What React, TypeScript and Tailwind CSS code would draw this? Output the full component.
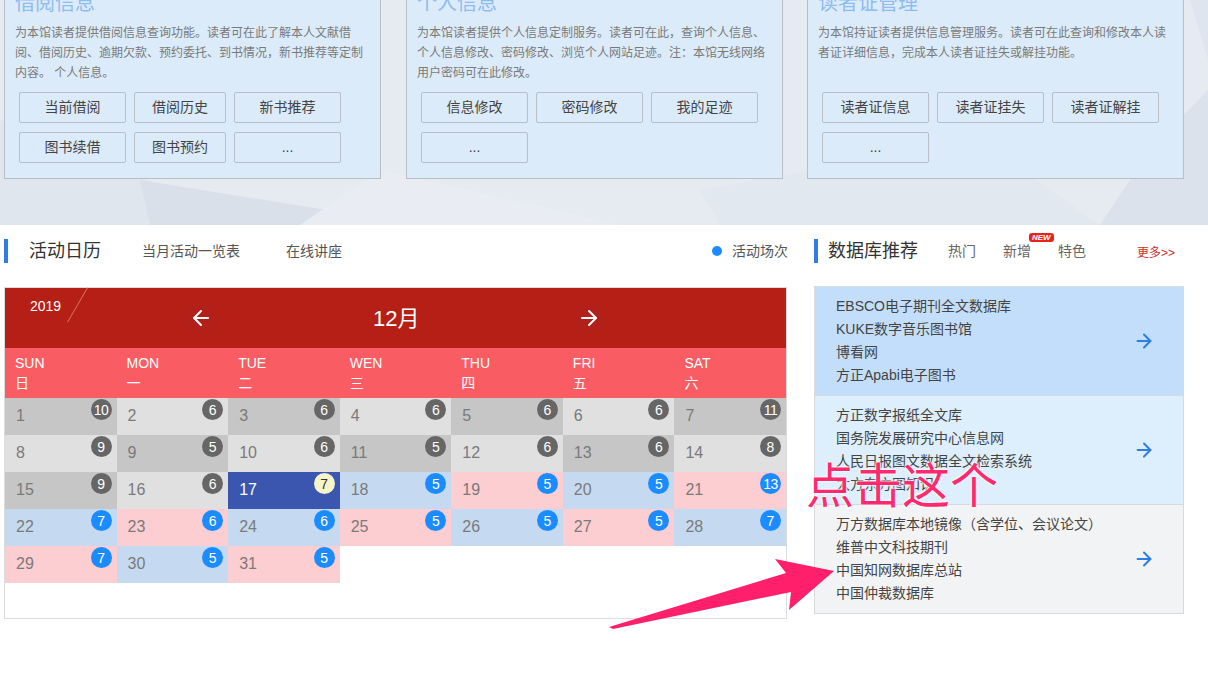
import { ArrowLeft, ArrowRight } from "lucide-react";

const FONT = { fontFamily: '"Liberation Sans", "Noto Sans CJK SC", sans-serif' };

const cards = [
  {
    title: "借阅信息",
    text: "为本馆读者提供借阅信息查询功能。读者可在此了解本人文献借阅、借阅历史、逾期欠款、预约委托、到书情况，新书推荐等定制内容。 个人信息。",
    buttons: [
      ["当前借阅", "w-[107px]"],
      ["借阅历史", "w-[92px]"],
      ["新书推荐", "w-[107px]"],
      ["图书续借", "w-[107px]"],
      ["图书预约", "w-[92px]"],
      ["...", "w-[107px]"],
    ],
    ml: "ml-[4px]",
  },
  {
    title: "个人信息",
    text: "为本馆读者提供个人信息定制服务。读者可在此，查询个人信息、个人信息修改、密码修改、浏览个人网站足迹。注：本馆无线网络用户密码可在此修改。",
    buttons: [
      ["信息修改", "w-[107px]"],
      ["密码修改", "w-[107px]"],
      ["我的足迹", "w-[107px]"],
      ["...", "w-[107px]"],
    ],
    ml: "ml-[25px]",
  },
  {
    title: "读者证管理",
    text: "为本馆持证读者提供信息管理服务。读者可在此查询和修改本人读者证详细信息，完成本人读者证挂失或解挂功能。",
    buttons: [
      ["读者证信息", "w-[107px]"],
      ["读者证挂失", "w-[107px]"],
      ["读者证解挂", "w-[107px]"],
      ["...", "w-[107px]"],
    ],
    ml: "ml-[24px]",
  },
];

const weekdays = [
  ["SUN", "日"],
  ["MON", "一"],
  ["TUE", "二"],
  ["WEN", "三"],
  ["THU", "四"],
  ["FRI", "五"],
  ["SAT", "六"],
];

const counts = [10, 6, 6, 6, 6, 6, 11, 9, 5, 6, 5, 6, 6, 8, 9, 6, 7, 5, 5, 5, 13, 7, 6, 6, 5, 5, 5, 7, 7, 5, 5];

function cellStyle(day: number) {
  if (day === 17) return { bg: "bg-[#3a56ae]", num: "text-white", badge: "bg-[#f6f5c9] text-[#333]" };
  if (day < 17) {
    const dark = (day - 1) % 2 === 0;
    return {
      bg: dark ? "bg-[#c6c6c6]" : "bg-[#e0e0e0]",
      num: "text-[#7a7a7a]",
      badge: "bg-[#666666] text-white",
    };
  }
  const blue = day % 2 === 0;
  return {
    bg: blue ? "bg-[#c5daf1]" : "bg-[#fccdd1]",
    num: "text-[#7a7a7a]",
    badge: "bg-[#1a8cff] text-white",
  };
}

const dbGroups = [
  {
    bg: "bg-[#c3defa]",
    items: ["EBSCO电子期刊全文数据库", "KUKE数字音乐图书馆", "博看网", "方正Apabi电子图书"],
  },
  {
    bg: "bg-[#ddeefd]",
    items: ["方正数字报纸全文库", "国务院发展研究中心信息网", "人民日报图文数据全文检索系统", "大方东方图知识"],
  },
  {
    bg: "bg-[#f2f3f5]",
    items: ["万方数据库本地镜像（含学位、会议论文）", "维普中文科技期刊", "中国知网数据库总站", "中国仲裁数据库"],
  },
];

function InfoCard({ card }: { card: (typeof cards)[number] }) {
  return (
    <div className={`${card.ml} w-[377px] shrink-0 border border-[#b8bdc6] bg-[#dbebf9] px-[10px] pb-[15px]`}>
      <div className="text-[20px] leading-[24px] text-[#8dbcef]">{card.title}</div>
      <p className="mt-[8px] h-[60px] text-[12px] leading-[20px] text-[#7a7a7a]">{card.text}</p>
      <div className="mt-[9px] ml-[4px] flex flex-wrap gap-x-[8px] gap-y-[9px]">
        {card.buttons.map(([label, w], i) => (
          <div
            key={i}
            className={`${w} flex h-[31px] items-center justify-center rounded-[2px] border border-[#b9bec7] text-[14px] text-[#444]`}
          >
            {label}
          </div>
        ))}
      </div>
    </div>
  );
}

function Calendar() {
  return (
    <div className="ml-[4px] h-[332px] w-[783px] border border-[#dcdcdc] bg-white">
      <div className="relative flex h-[60px] items-center bg-[#b51f16] text-white">
        <span className="absolute left-[25px] top-[8px] text-[14px]">2019</span>
        <span className="absolute left-[72px] top-[-3px] h-[40px] w-px rotate-[30deg] bg-[#d86a5f]" />
        <div className="ml-[181px] flex h-[26px] w-[30px] items-center justify-center bg-[#b22019]">
          <ArrowLeft size={24} strokeWidth={2} />
        </div>
        <span className="ml-[157px] text-[22px]">12月</span>
        <div className="ml-[155px] flex h-[26px] w-[30px] items-center justify-center bg-[#b22019]">
          <ArrowRight size={24} strokeWidth={2} />
        </div>
      </div>
      <div className="grid h-[50px] grid-cols-7 bg-[#f95d63] text-[14px] leading-[20px] text-white">
        {weekdays.map(([en, zh]) => (
          <div key={en} className="pl-[10px] pt-[5px]">
            <div>{en}</div>
            <div>{zh}</div>
          </div>
        ))}
      </div>
      <div className="grid grid-cols-7">
        {counts.map((c, i) => {
          const day = i + 1;
          const s = cellStyle(day);
          return (
            <div key={day} className={`${s.bg} relative h-[37px]`}>
              <span className={`${s.num} absolute left-[11px] top-[8px] text-[16px] leading-[20px]`}>{day}</span>
              <span
                className={`${s.badge} absolute right-[5px] top-[1px] flex h-[21px] w-[21px] items-center justify-center rounded-full text-[14px] leading-none ${c > 9 ? "tracking-[-0.5px]" : ""}`}
              >
                {c}
              </span>
            </div>
          );
        })}
      </div>
    </div>
  );
}

function Background() {
  return (
    <svg className="absolute inset-0 h-full w-full" viewBox="0 0 1208 225" preserveAspectRatio="none">
      <rect width="1208" height="225" fill="#e6ebf2" />
      <polygon points="0,120 260,225 0,225" fill="#e0e6ee" />
      <polygon points="140,180 420,225 150,225" fill="#d9e0ea" />
      <polygon points="380,170 620,225 300,225" fill="#e9edf3" />
      <polygon points="700,190 980,140 1100,225 720,225" fill="#e2e8f0" />
      <polygon points="1150,150 1208,90 1208,225 1100,225" fill="#dbe2eb" />
      <polygon points="1190,0 1208,0 1208,60" fill="#dfe5ee" />
    </svg>
  );
}

export default function App() {
  return (
    <div className="relative h-[675px] w-[1208px] overflow-hidden bg-white" style={FONT}>
      <div className="relative h-[225px] overflow-hidden">
        <Background />
        <div className="relative -mt-[10px] flex">
          {cards.map((c) => (
            <InfoCard key={c.title} card={c} />
          ))}
        </div>
      </div>

      <div className="mt-[14px] flex">
        <div className="w-[790px] shrink-0">
          <div className="flex h-[24px] items-center whitespace-nowrap">
            <span className="ml-[4px] h-[24px] w-[4px] bg-[#2f7ee6]" />
            <span className="ml-[21px] text-[18px] text-[#333]">活动日历</span>
            <span className="ml-[41px] text-[14px] text-[#555]">当月活动一览表</span>
            <span className="ml-[46px] text-[14px] text-[#555]">在线讲座</span>
            <span className="ml-auto h-[10px] w-[10px] rounded-full bg-[#1a8cff]" />
            <span className="ml-[10px] mr-[2px] text-[14px] text-[#555]">活动场次</span>
          </div>
          <div className="mt-[24px]">
            <Calendar />
          </div>
        </div>

        <div className="ml-[24px] w-[370px] shrink-0">
          <div className="flex h-[24px] items-center whitespace-nowrap">
            <span className="h-[24px] w-[4px] shrink-0 bg-[#2f7ee6]" />
            <span className="ml-[10px] text-[18px] text-[#333]">数据库推荐</span>
            <span className="ml-[30px] text-[14px] text-[#666]">热门</span>
            <span className="relative ml-[27px] text-[14px] text-[#666]">
              新增
              <span className="absolute left-[26px] top-[-8px] rounded-[3px] bg-[#e8231b] px-[3px] text-[8px] font-bold italic leading-[9px] text-white">
                NEW
              </span>
            </span>
            <span className="ml-[27px] text-[14px] text-[#666]">特色</span>
            <span className="ml-[51px] mt-[4px] text-[12px] text-[#c9302c]">更多&gt;&gt;</span>
          </div>
          <div className="mt-[23px] w-[370px] border border-[#d6d9de]">
            {dbGroups.map((g, i) => (
              <div
                key={i}
                className={`${g.bg} flex items-center py-[8px] pl-[21px] pr-[28px] ${i > 0 ? "border-t border-[#d6d9de]" : ""}`}
              >
                <div className="flex-1 whitespace-nowrap text-[14px] leading-[23px] text-[#444]">
                  {g.items.map((t) => (
                    <div key={t}>{t}</div>
                  ))}
                </div>
                <ArrowRight size={22} strokeWidth={2.2} className="text-[#2d7fe0]" />
              </div>
            ))}
          </div>
        </div>
      </div>

      {/* annotation overlay */}
      <svg className="pointer-events-none absolute left-0 top-0" width="1208" height="675">
        <polygon
          points="609,627 786,573 775,559 834,571 789,610 791,592 613,629"
          fill="#ff1f6b"
        />
      </svg>
      <div
        className="pointer-events-none absolute left-[806px] top-[458px] text-[48px] leading-none text-[#ff2a6d] [text-shadow:0_0_2px_#fff,0_0_2px_#fff,0_0_3px_#fff]"
        style={{ fontFamily: '"Noto Sans CJK SC", sans-serif' }}
      >
        点击这个
      </div>
    </div>
  );
}
